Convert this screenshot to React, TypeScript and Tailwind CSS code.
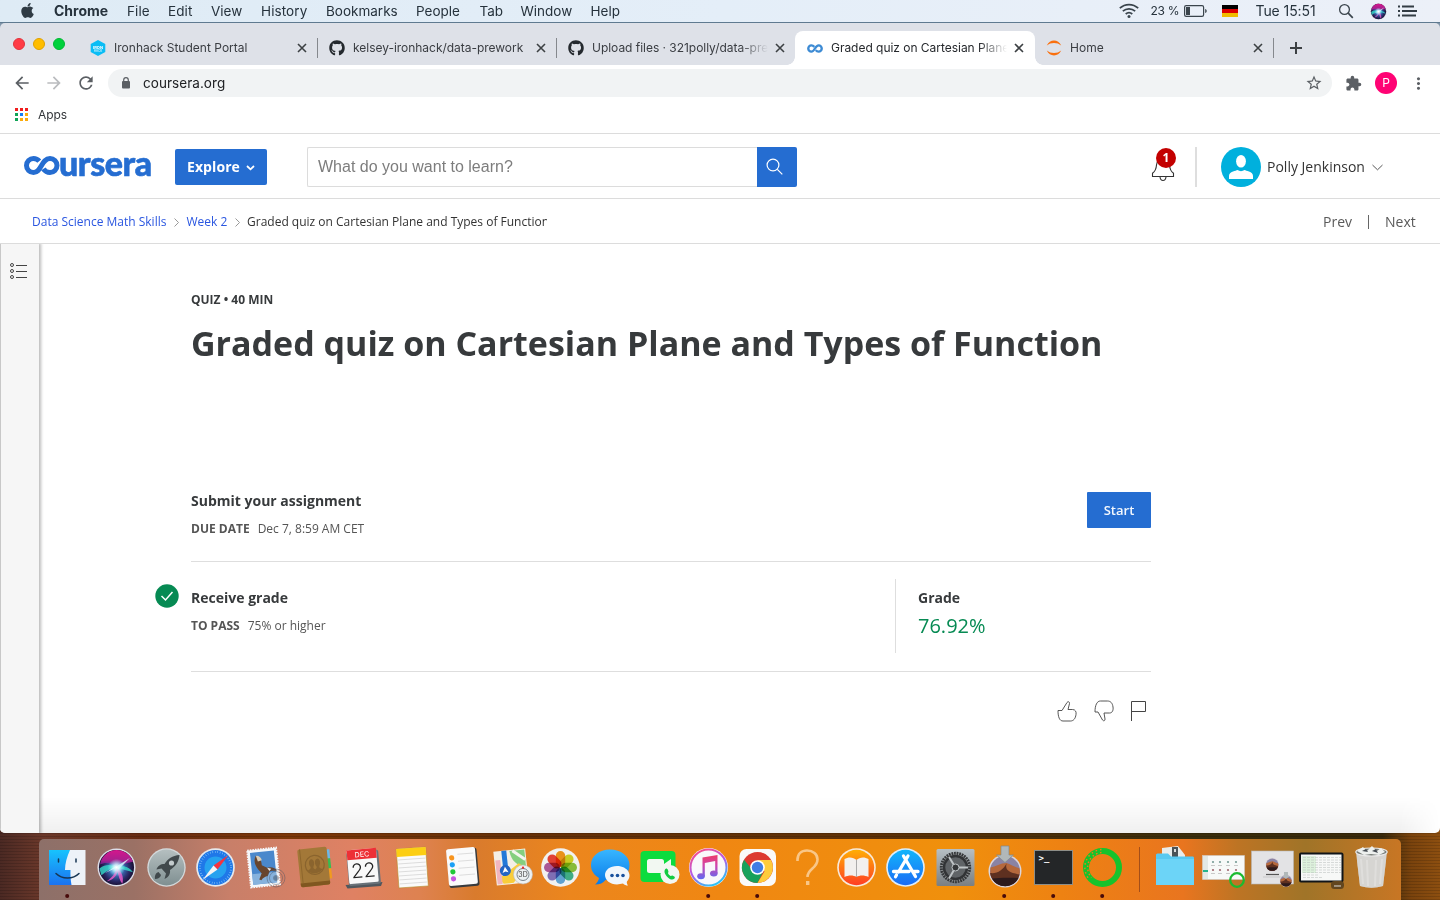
import React from "react";
import { FaApple, FaGithub } from "react-icons/fa";
import { MdArrowBack, MdArrowForward, MdRefresh, MdStarBorder, MdExtension, MdMoreVert } from "react-icons/md";

type Kids = { children?: React.ReactNode };

function MenuBar() {
  return (
    <div className="flex h-[23px] w-full items-center border-b border-[#5f7a90] bg-gradient-to-r from-[#deebf5] via-[#e4eef8] to-[#ecf0f8] font-[Inter,sans-serif] text-[13.5px] leading-[22px] text-[#26323c]">
      <div className="flex w-[54px] pl-[19px]"><FaApple className="-mt-[2px] size-[17px] text-[#2f3b44]" /></div>
      <div className="w-[73px] text-[14px] font-bold tracking-[0px]">Chrome</div>
      <div className="w-[41px] tracking-[0.100px]">File</div>
      <div className="w-[43px] tracking-[0.100px]">Edit</div>
      <div className="w-[50px]">View</div>
      <div className="w-[65px] tracking-[0.100px]">History</div>
      <div className="w-[90px]">Bookmarks</div>
      <div className="w-[63.500px]">People</div>
      <div className="w-[41px]">Tab</div>
      <div className="w-[70px]">Window</div>
      <div className="w-[528px]">Help</div>
      <svg className="-mt-px h-[16px] w-[20px]" viewBox="0 0 20 16" fill="none" stroke="#3a444c" strokeWidth="1.700">
        <path d="M.8 5.200C6 .4 14 .4 19.200 5.200M3.800 8.200c3.600-3.200 8.800-3.200 12.400 0M6.700 11c2-1.700 4.600-1.700 6.600 0" />
        <circle cx="10" cy="13.600" r="1.500" fill="#3a444c" stroke="none" />
      </svg>
      <div className="ml-[12px] w-[33px] whitespace-nowrap text-[12px] tracking-[-0.300px]">23 %</div>
      <svg className="h-[12px] w-[24px]" viewBox="0 0 24 12">
        <rect x=".6" y=".6" width="19" height="10.800" rx="1.600" fill="none" stroke="#3a444c" strokeWidth="1.200" />
        <rect x="2" y="2" width="4" height="8" fill="#3a444c" />
        <path d="M21.200 4v4c1-.4 1.500-1.100 1.500-2s-.5-1.600-1.500-2z" fill="#3a444c" />
      </svg>
      <div className="ml-[14px] flex h-[12px] w-[16px] flex-col"><i className="h-1 bg-black" /><i className="h-1 bg-[#dc0000]" /><i className="h-1 bg-[#f0bd00]" /></div>
      <div className="ml-[18px] w-[82.500px] whitespace-nowrap text-[14px] tracking-[-0.080px]">Tue 15:51</div>
      <svg className="size-[16px]" viewBox="0 0 16 16" fill="none" stroke="#3a444c" strokeWidth="1.300"><circle cx="6.500" cy="6.500" r="4.900" /><path d="m10.200 10.200 4.600 4.600" strokeWidth="1.700" /></svg>
      <svg className="ml-[16px] size-[17px]" viewBox="0 0 40 40"><Siri /></svg>
      <svg className="ml-[11px] h-[12px] w-[19px]" viewBox="0 0 19 12" stroke="#333c44" strokeWidth="1.900"><path d="M0 1.500h2M0 6h2M0 10.500h2M4 1.500h12M4 6h15M4 10.500h14" /></svg>
    </div>
  );
}

function Siri() {
  return (
    <g>
      <defs>
        <radialGradient id="siri" cx=".5" cy=".52" r=".52"><stop offset="0" stopColor="#a9f4ff" /><stop offset=".3" stopColor="#3e7fc6" /><stop offset=".7" stopColor="#2a2a68" /><stop offset="1" stopColor="#160b28" /></radialGradient>
        <radialGradient id="siriGlow"><stop offset="0" stopColor="#fff" /><stop offset=".35" stopColor="#d8fbff" stopOpacity=".8" /><stop offset="1" stopColor="#9ff" stopOpacity="0" /></radialGradient>
        <linearGradient id="siriTop" x1="0" y1="0" x2="0" y2="1"><stop offset="0" stopColor="#d5168c" /><stop offset=".6" stopColor="#a8208f" /><stop offset="1" stopColor="#7b2bb8" stopOpacity=".3" /></linearGradient>
      </defs>
      <circle cx="20" cy="20" r="19.500" fill="#dcdde8" />
      <circle cx="20" cy="20" r="18" fill="url(#siri)" />
      <path d="M3 17C5 7 13 2 20 2s14 4 17 12c-6 1-12 3-15 6C15 15 9 14 3 17z" fill="url(#siriTop)" />
      <path d="M2.500 21c7-5 12-4 18-1-8 1-12 5-16 8zM20 20c8-3 13 0 17 5-6-2-11-3-17-5z" fill="#35dccb" opacity=".8" />
      <path d="M20 20c-1 6-5 11-10 14 6-1 10-5 11-10 1 4 2 9 5 13 2-7-1-14-6-17z" fill="#e85cc8" opacity=".85" />
      <path d="m20 19 14-9-12 12zM20 20 8 26l12-8z" fill="#dff" opacity=".8" />
      <circle cx="20" cy="20" r="9" fill="url(#siriGlow)" />
    </g>
  );
}

function Tab({ icon, title, active, sep, fade, tight }: { icon: React.ReactNode; title: string; active?: boolean; sep?: boolean; fade?: boolean; tight?: boolean }) {
  const mask = fade ? "[mask-image:linear-gradient(to_right,#000_148px,transparent_176px)]" : "";
  return (
    <div className={`relative flex h-[34px] shrink-0 items-center pl-[12px] ${active ? "-mr-px w-[240px] rounded-t-[8px] bg-white text-[#25282c]" : "w-[239px]"}`}>
      {active && (
        <>
          <i className="absolute -left-[8px] bottom-0 size-[8px] bg-[radial-gradient(circle_at_0_0,transparent_7.500px,white_8px)]" />
          <i className="absolute -right-[8px] bottom-0 size-[8px] bg-[radial-gradient(circle_at_100%_0,transparent_7.500px,white_8px)]" />
        </>
      )}
      <div className="flex size-[16px] shrink-0 items-center justify-center">{icon}</div>
      <div className={`ml-[8px] w-[176px] shrink-0 overflow-hidden whitespace-nowrap ${tight ? "tracking-[-0.030px]" : "tracking-[0.020px]"} ${mask}`}>{title}</div>
      <svg className="ml-[7px] size-[10px] shrink-0" viewBox="0 0 10 10" stroke="#3c4043" strokeWidth="1.600"><path d="m1 1 8 8M9 1 1 9" /></svg>
      {sep && <i className="absolute right-[-1px] top-[7px] h-[20px] w-px bg-[#85888d]" />}
    </div>
  );
}

function Infinity2() {
  return (
    <svg className="h-[9px] w-[16px]" viewBox="0 0 44 24" fill="none" stroke="#3d8bd4" strokeWidth="6.500"><path d="M20 7.500C17 4 14 3.500 12 3.500a8.500 8.500 0 0 0 0 17c10 0 10-17 20-17a8.500 8.500 0 0 1 0 17c-4 0-6-1.500-8-4" /></svg>
  );
}

function Browser() {
  return (
    <>
      <div className="bg-[#7f94a8]">
        <div className="flex h-[42px] items-end rounded-t-[5px] bg-[#dee1e8] font-[Inter,sans-serif] text-[12px] text-[#3a3d42]">
          <div className="flex h-full w-[78px] shrink-0 items-center gap-[8px] pl-[13px]">
            <i className="size-[12px] rounded-full border border-[#e2333c] bg-[#ff3b45]" />
            <i className="size-[12px] rounded-full border border-[#e0a100] bg-[#ffbd00]" />
            <i className="size-[12px] rounded-full border border-[#00b833] bg-[#00d13c]" />
          </div>
          <Tab sep title="Ironhack Student Portal" icon={<svg className="size-[16px]" viewBox="0 0 16 16"><path d="m8 0 7.300 4v8L8 16 .7 12V4z" fill="#0abdf5" /><text x="8" y="8.500" textAnchor="middle" fontSize="4" fontWeight="700" fill="#fff">IRON</text><text x="8" y="11.500" textAnchor="middle" fontSize="3" fill="#fff">HACK</text></svg>} />
          <Tab sep tight title="kelsey-ironhack/data-prework" icon={<FaGithub className="size-[16px] text-[#24292e]" />} />
          <Tab fade tight title="Upload files · 321polly/data-prework" icon={<FaGithub className="size-[16px] text-[#24292e]" />} />
          <Tab active fade tight title="Graded quiz on Cartesian Plane and" icon={<Infinity2 />} />
          <Tab sep title="Home" icon={<svg className="size-[16px]" viewBox="0 0 16 16" fill="#f9700f"><path d="M.8 5.500C2.400 2.200 5 .6 8 .6s5.600 1.600 7.200 4.900C13.200 3.800 10.800 3 8 3S2.800 3.800.8 5.500zM.8 10.500c1.600 3.300 4.200 4.900 7.200 4.900s5.600-1.600 7.200-4.900C13.200 12.200 10.800 13 8 13s-5.200-.8-7.200-2.500z" /></svg>} />
          <div className="flex h-[34px] items-center pl-[17px]"><svg className="size-[12px]" viewBox="0 0 12 12" stroke="#3c4043" strokeWidth="2"><path d="M6 0v12M0 6h12" /></svg></div>
        </div>
      </div>
      <div className="flex h-[36px] items-center bg-white pl-[12px] text-[#5b5f64]">
        <MdArrowBack className="size-[20px]" />
        <MdArrowForward className="ml-[12px] size-[20px] text-[#babcbf]" />
        <MdRefresh className="ml-[12px] size-[20px]" />
        <div className="ml-[12px] flex h-[28px] w-[1224px] items-center rounded-full bg-[#f1f3f4] pl-[11px]">
          <svg className="h-[14px] w-[14px]" viewBox="0 0 14 14"><rect x="3" y="5" width="8" height="7.500" rx="1" fill="#5b5f64" /><path d="M4.700 5.500V4a2.300 2.300 0 0 1 4.600 0v1.500" fill="none" stroke="#5b5f64" strokeWidth="1.200" /></svg>
          <div className="ml-[10px] flex-1 font-[Inter,sans-serif] text-[13.500px] tracking-[0.050px] text-[#202124]">coursera.org</div>
          <MdStarBorder className="mr-[9px] size-[18px]" />
        </div>
        <MdExtension className="ml-[13px] size-[17px]" />
        <div className="ml-[13px] flex size-[22px] items-center justify-center rounded-full bg-[#ff0374] font-[Inter,sans-serif] text-[12px] text-white">P</div>
        <MdMoreVert className="ml-[12px] size-[19px]" />
      </div>
      <div className="flex h-[33px] items-start border-b border-[#dcdcdc] bg-white pl-[15px] pt-[6px]">
        <svg className="mt-px size-[13px]" viewBox="0 0 13 13">
          <path d="M0 0h3v3H0zM5 0h3v3H5zM10 0h3v3h-3z" fill="#f01d1d" />
          <path d="M0 5h3v3H0zM0 10h3v3H0z" fill="#10a457" /><path d="M5 5h3v3H5z" fill="#147ef5" />
          <path d="M10 5h3v3h-3zM5 10h3v3H5zM10 10h3v3h-3z" fill="#fbab0b" />
        </svg>
        <div className="ml-[10px] font-[Inter,sans-serif] text-[12px] leading-[15px] tracking-[-0.100px] text-[#33363a]">Apps</div>
      </div>
    </>
  );
}

function Header() {
  return (
    <>
      <div className="flex h-[65px] items-center border-b border-[#dcdcdc] bg-white pl-[24px] pt-[2px]">
        <div className="flex h-[40px] w-[151px] items-center" aria-label="coursera">
          <svg className="-mt-[3px] h-[19px] w-[36px] shrink-0" viewBox="0 0 36 19" fill="none" stroke="#256dd1" strokeWidth="5"><path d="M15.300 5.200C13.700 3.300 11.600 2.500 9.500 2.500a7 7 0 0 0 0 14C17.500 16.500 17.300 2.500 26 2.500a7 7 0 0 1 0 14c-2.800 0-5-1.300-6.600-3.700" /></svg>
          <div className="-ml-px -mt-[9px] whitespace-nowrap font-[Lato,sans-serif] text-[34px] font-black leading-[34px] tracking-[-0.450px] text-[#256dd1] [-webkit-text-stroke:0.600px_#256dd1]">ursera</div>
        </div>
        <div className="flex h-[36px] w-[92px] items-center rounded-[2px] bg-[#256dd1] pl-[12px] font-['Open_Sans',sans-serif] text-[14px] font-bold tracking-[0.080px] text-white">
          <span className="-mt-[2px]">Explore</span><svg className="ml-[6px] mt-[2px] h-[6px] w-[9px]" viewBox="0 0 9 6" fill="none" stroke="#fff" strokeWidth="1.800"><path d="m1 1 3.500 3.300L8 1" /></svg>
        </div>
        <div className="ml-[40px] flex h-[40px] w-[450px] items-center rounded-l-[2px] border border-r-0 border-[#dcdcdc] pl-[10px] font-['Liberation_Sans',sans-serif] text-[16px] text-[#7d7d7d]">What do you want to learn?</div>
        <div className="flex size-[40px] items-center justify-center rounded-r-[2px] bg-[#256dd1]"><svg className="-ml-[5px] -mt-px size-[17px]" viewBox="0 0 17 17" fill="none" stroke="#fff" strokeWidth="1.200"><circle cx="7" cy="7" r="5.900" /><path d="m11.300 11.300 5 5" /></svg></div>
        <div className="relative ml-[354px] h-[40px] w-[24px]">
          <svg className="absolute left-0 top-[9px] h-[26px] w-[24px]" viewBox="0 0 24 26" fill="none" stroke="#333" strokeWidth="1.100"><path d="M1.500 20.500v-3.200c3.200-2.500 3.800-5 4-8.300C5.900 5.500 8 3.500 12 3.500s6.100 2 6.500 5.500c.2 3.300.8 5.800 4 8.300v3.200zM9 21c.3 2.300 1.500 3.500 3 3.500s2.700-1.200 3-3.500" /></svg>
          <div className="absolute left-[5px] top-px flex size-[20px] items-center justify-center rounded-full bg-[#c30000] font-['Open_Sans',sans-serif] text-[12px] font-bold text-white">1</div>
        </div>
        <i className="ml-[20px] h-[40px] w-[2px] bg-[#dedede]" />
        <svg className="ml-[24px] size-[40px]" viewBox="0 0 40 40"><circle cx="20" cy="20" r="20" fill="#00b0dd" /><ellipse cx="20" cy="14.300" rx="4.900" ry="6.300" fill="#fff" /><path d="M8 32v-3c0-2.500 1.500-3.800 4-4.600 2-.6 3.500-.9 4.500-1.400 2 1.500 5 1.500 7 0 1 .5 2.500.8 4.500 1.400 2.500.8 4 2.100 4 4.600v3z" fill="#fff" /></svg>
        <div className="-mt-px ml-[6px] w-[104.500px] whitespace-nowrap font-['Open_Sans',sans-serif] text-[14px] text-[#333]">Polly Jenkinson</div>
        <svg className="mt-px h-[7px] w-[11px]" viewBox="0 0 11 7" fill="none" stroke="#555"><path d="m.5 1 5 4.800 5-4.800" /></svg>
      </div>
      <div className="flex h-[45px] items-center border-b border-[#dcdcdc] bg-white pl-[32px] font-['Open_Sans',sans-serif] text-[12px] text-[#333]">
        <div className="mt-[2px] w-[142px] whitespace-nowrap text-[#2a56e0]">Data Science Math Skills</div>
        <Chevron />
        <div className="ml-[7.500px] mt-[2px] w-[48px] text-[#2a56e0]">Week 2</div>
        <Chevron />
        <div className="ml-[7.500px] mt-[2px] w-[300px] overflow-hidden whitespace-nowrap">Graded quiz on Cartesian Plane and Types of Function</div>
        <div className="ml-[776px] w-[45px] text-[14px] text-[#5a5a5a]">Prev</div>
        <i className="mt-px h-[14px] w-px bg-[#666]" />
        <div className="ml-[16px] text-[14px] text-[#5a5a5a]">Next</div>
      </div>
    </>
  );
}

function Chevron() {
  return <svg className="mt-[3px] h-[9px] w-[5px] shrink-0" viewBox="0 0 5 9" fill="none" stroke="#999"><path d="m.5.5 4 4-4 4" /></svg>;
}

function Page() {
  return (
    <div className="relative flex h-[589px] overflow-hidden rounded-b-[5px] bg-white font-['Open_Sans',sans-serif] text-[#373a3c]">
      <div className="z-10 w-[39px] shrink-0 border-l border-[#c8c8c8] bg-[#f6f6f6] pl-[8px] pt-[18px] shadow-[1px_0_3px_1px_rgba(0,0,0,0.27)]">
        <svg className="h-[18px] w-[19px]" viewBox="0 0 19 18" fill="none" stroke="#444"><circle cx="3" cy="3" r="1.500" /><circle cx="3" cy="9" r="1.500" /><circle cx="3" cy="15" r="1.500" /><path d="M7 3.500h11M7 9.500h11M7 15.500h11" /></svg>
      </div>
      <div className="ml-[152px] w-[960px]">
        <div className="mt-[47px] text-[12px] font-bold leading-[18px]">QUIZ • 40 MIN</div>
        <h1 className="mt-[10px] whitespace-nowrap text-[34px] font-bold leading-[48px]">Graded quiz on Cartesian Plane and Types of Function</h1>
        <div className="mt-[125px] flex h-[70px] justify-between border-b border-[#dedede]">
          <div className="-mt-[3px]">
            <div className="text-[14px] font-bold leading-[24px]">Submit your assignment</div>
            <div className="mt-[5px] flex gap-[8px] text-[12px] leading-[22px] text-[#555]"><b>DUE DATE</b><span>Dec 7, 8:59 AM CET</span></div>
          </div>
          <div className="flex h-[36px] w-[64px] items-center justify-center rounded-[1px] bg-[#256dd1] pt-px text-[13px] font-semibold text-white/95">Start</div>
        </div>
        <div className="relative flex h-[110px] border-b border-[#dedede] pt-[17px]">
          <svg className="absolute -left-[36px] top-[22px] size-[24px]" viewBox="0 0 24 24"><circle cx="12" cy="12" r="11.700" fill="#068a53" /><path d="m6.500 12 4 4 7-8" fill="none" stroke="#fff" strokeWidth="1.500" /></svg>
          <div className="w-[704px] pt-[7px]">
            <div className="text-[14px] font-bold leading-[24px]">Receive grade</div>
            <div className="mt-[5px] flex gap-[8px] text-[12px] leading-[22px] text-[#555]"><b>TO PASS</b><span>75% or higher</span></div>
          </div>
          <div className="h-[74px] border-l border-[#dedede] pl-[22px] pt-[7px]">
            <div className="text-[14px] font-bold leading-[24px]">Grade</div>
            <div className="mt-px text-[20px] leading-[30px] text-[#068a53]">76.92%</div>
          </div>
        </div>
        <div className="mt-[28px] flex justify-end pr-[5px]">
          <svg className="h-[22px] w-[20px]" viewBox="0 0 20 22" fill="none" stroke="#444" strokeWidth=".9"><path d="M1 10.500h4l5-8c1-1.500 2.800-.7 2.500 1L11 9.500h4.500c3 0 4 2.500 3.500 5-.5 4-2.500 6.500-5.500 6.500H6c-3.500 0-5-4-5-10.500z" /></svg>
          <svg className="ml-[17px] h-[22px] w-[20px]" viewBox="0 0 20 22" fill="none" stroke="#444" strokeWidth=".9"><path d="M1 12h3l4.500 8c1 1.500 2.800.7 2.500-1l-1-6h5.500c3 0 4-3 3.500-6-.5-4-2.500-6-5.500-6H6.500C3 1 1 5 1 12z" /></svg>
          <svg className="ml-[16px] h-[22px] w-[16px]" viewBox="0 0 16 22" fill="none" stroke="#444"><path d="M1.500 21V1.500h14v10h-14" /></svg>
        </div>
      </div>
      <div className="absolute bottom-0 left-0 h-[36px] w-full bg-gradient-to-t from-black/[0.060] to-transparent [mask-image:linear-gradient(to_right,transparent,#000_40px_1400px,transparent)]" />
    </div>
  );
}

function Cell({ children, dot }: Kids & { dot?: boolean }) {
  return (
    <svg className="h-[61px] w-[49.300px] shrink-0" viewBox="0 0 49.300 61">
      {children}
      {dot && <circle cx="24.200" cy="57" r="2" fill="#480a0a" />}
    </svg>
  );
}

const petals: [number, string][] = [[0, "#f79a1b"], [45, "#d5d825"], [90, "#8fc63d"], [135, "#43b68d"], [180, "#65aadc"], [225, "#8675c0"], [270, "#b45ca0"], [315, "#ef4438"]];

function Dock() {
  return (
    <div className="mx-[39px] mt-[6px] flex h-[61px] items-start rounded-t-[5px] bg-[linear-gradient(90deg,#8d7069_0%,#9b7165_7%,#c87f69_14%,#df8163_23%,#de8250_28%,#d97b2d_32%,#ec861d_39%,#f08712_50%,#f0900c_67%,#ee8212_75%,#e9751f_84%,#bd7424_88%,#a07428_93%,#c87624_100%)] pl-[4.200px]">
      <Cell dot>
        <defs><linearGradient id="fb" x1="0" y1="0" x2="0" y2="1"><stop offset="0" stopColor="#17c3fd" /><stop offset="1" stopColor="#1b72f0" /></linearGradient></defs>
        <path d="M6 11h36.500v35H6z" fill="#edf2f8" /><path d="M6 11h21c-3 7-5 13-5 20h5.500c-.2 5 .1 10 1 15H6z" fill="url(#fb)" />
        <path d="M15.500 20v3M33 20v3M13 34.500c6 6 17 6 23 0" fill="none" stroke="#173653" strokeWidth="1.500" strokeLinecap="round" />
      </Cell>
      <Cell><svg x="5" y="9" width="39" height="39" viewBox="0 0 40 40"><Siri /></svg></Cell>
      <Cell>
        <defs><linearGradient id="lp" x1="0" y1="0" x2="0" y2="1"><stop offset="0" stopColor="#b5bfc0" /><stop offset="1" stopColor="#7f8f91" /></linearGradient></defs>
        <circle cx="24.500" cy="28.500" r="19.200" fill="#d4d9db" /><circle cx="24.500" cy="28.500" r="17.900" fill="url(#lp)" />
        <path d="M37.500 16c-7 .5-12 4-15 9-4 0-7 2-8 5.500l5-1 4.500 5-1.500 5.500c4-1.500 6-5 5.500-9 5-3 9-8 9.500-15z" fill="#41494c" /><circle cx="29.500" cy="24" r="2.600" fill="#c3cbcd" /><path d="M16.500 33c-3 1-4 4-3.500 7 3 0 5.500-1.500 6-4z" fill="#41494c" />
      </Cell>
      <Cell>
        <circle cx="24.500" cy="28.500" r="19.300" fill="#e6e8ec" /><circle cx="24.500" cy="28.500" r="17.600" fill="#1f78e8" /><circle cx="24.500" cy="28.500" r="15.600" fill="none" stroke="#9bd2fa" strokeWidth="2" strokeDasharray=".5 2" />
        <circle cx="24.500" cy="28.500" r="11" fill="#29b4f2" opacity=".7" />
        <path d="m37.500 16-15 10.500 4 4z" fill="#f5333f" /><path d="m11.500 41 11-14.500 4 4z" fill="#f4f4f4" />
      </Cell>
      <Cell>
        <g transform="rotate(-6 24 28)"><rect x="9" y="10" width="29" height="37" fill="#f5f7fa" stroke="#f5f7fa" strokeWidth="2" strokeDasharray="1.600 1" /><rect x="11.500" y="12.500" width="24" height="32" fill="#4a88cc" /><path d="M11.500 34h24v10.500h-24z" fill="#86b2dd" />
          <path d="M17 16c4 1 5 5 5 10l5 3c4-1 8 1 10 4-3 0-6-1-8 0l-2 4c-3 1-5 1-7 4l-2-1 3-6-3-4c-3-5-4-9-1-14z" fill="#68452d" /><path d="M17 16c3 0 5 2 5.500 5l-4 1z" fill="#d9cdb8" /><path d="m27 29 4 1.500-2 2z" fill="#eee" /></g>
        <g fill="none" stroke="#4c5261" opacity=".45"><circle cx="36" cy="39" r="9" /><circle cx="36" cy="39" r="6.500" /><circle cx="36" cy="39" r="2.500" fill="#345" /></g>
      </Cell>
      <Cell>
        <g transform="rotate(-6 24 28)"><path d="M36 12h5v9h-5z" fill="#6bb9e6" /><path d="M36 21h5v10h-5z" fill="#36bd52" /><path d="M36 31h5v10h-5z" fill="#f09a20" /><rect x="9" y="9" width="29.500" height="38" rx="2" fill="#a37838" /><path d="M9 43h29.500v2a2 2 0 0 1-2 2H11a2 2 0 0 1-2-2z" fill="#805720" /><path d="M11.500 9v34" stroke="#8a622a" strokeWidth=".8" /><circle cx="25" cy="26" r="9.500" fill="none" stroke="#8a642e" strokeWidth="1.200" /><path d="M17.500 31c3-1.500 3.500-2 3-3.500-2-3-1-7.500 1.500-7.500s3.500 4.500 1.500 7.500c-.5 1.500 0 2 1.500 3 1.500-1 2-1.500 1.500-3-2-3-1-7.500 1.500-7.500s3.500 4.500 1.500 7.500c-.5 1.500 0 2 3 3.500-4 4.500-11 4.500-15 0z" fill="#8a642e" /></g>
      </Cell>
      <Cell>
        <path d="m6.500 46 37-3-1.500 4L8.500 49.500z" fill="#50575d" />
        <g transform="rotate(-5 24 28)"><rect x="8.500" y="12" width="32" height="34" rx="2" fill="#697178" /><rect x="9" y="10" width="29.500" height="34" rx="1.500" fill="#f8f8f8" /><path d="M9 10h29.500v10H9z" fill="#ed3036" /><text x="24" y="17.800" textAnchor="middle" fontFamily="Inter" fontSize="7.200" fill="#fff">DEC</text><text x="24" y="38.500" textAnchor="middle" fontFamily="Inter" fontSize="20" fontWeight="300" fill="#222">22</text></g>
      </Cell>
      <Cell>
        <g transform="rotate(-4 24.500 28)"><rect x="9.500" y="9" width="29.500" height="39" fill="#fafafa" stroke="#b58b2a" strokeWidth=".6" /><path d="M9.500 9H39v8H9.500z" fill="#fcce13" /><path d="M10.500 20H38M10.500 24H38M10.500 28H38M10.500 32H38M10.500 36H38M10.500 40H38M10.500 44H38" stroke="#d6d6d6" strokeWidth=".8" /></g>
      </Cell>
      <Cell>
        <g transform="rotate(-5 24 28)"><rect x="10" y="10" width="30" height="38" rx="2" fill="#383b3e" /><rect x="9.500" y="9" width="29" height="37" rx="2" fill="#fafafa" /><circle cx="14.500" cy="18" r="2.600" fill="#f7941e" /><circle cx="14.500" cy="25" r="2.600" fill="#1ba0f6" /><circle cx="14.500" cy="32" r="2.600" fill="#20c838" /><circle cx="14.500" cy="39" r="2.600" fill="#c755e0" /><path d="M20.500 15h16M20.500 22h16M20.500 29h16M20.500 36h16" stroke="#ddd" /></g>
      </Cell>
      <Cell>
        <g transform="rotate(-6 24 28)"><rect x="8" y="11" width="32" height="34" fill="#f4efe5" /><path d="M24 12h15v17c-9-1-14-7-15-17z" fill="#85cf7f" /><path d="m27 12 12 10" stroke="#f5f5ef" strokeWidth="3" /><path d="M9 36h6l17-11 7 5-14 14H15z" fill="#f9cd3b" /><path d="M9 20h5v24H9z" fill="#f1b5be" /><path d="M16 11h5v19h-5z" fill="#2378d8" /><circle cx="18" cy="31" r="5.500" fill="#2465c4" /><path d="m18 27 3 6-3-1-3 1z" fill="#fff" /></g>
        <circle cx="36" cy="35.500" r="9.500" fill="#edf1f2" stroke="#bbb" strokeWidth=".6" /><circle cx="36" cy="35.500" r="6" fill="none" stroke="#78838b" /><text x="36" y="38.200" textAnchor="middle" fontFamily="Inter" fontSize="7" fill="#444">3D</text><path d="m36 27-1.500 2.500h3z" fill="#e11" />
      </Cell>
      <Cell>
        <circle cx="24.500" cy="28.500" r="19.300" fill="#f1f1f0" />
        {petals.map(([angle, color]) => <rect key={angle} x="19.800" y="12" width="9.400" height="16" rx="4.700" fill={color} className="mix-blend-multiply" transform={`rotate(${angle} 24.500 28.500)`} />)}
      </Cell>
      <Cell>
        <defs><linearGradient id="msg" x1="0" y1="0" x2="0" y2="1"><stop offset="0" stopColor="#38b6ff" /><stop offset="1" stopColor="#087ae8" /></linearGradient></defs>
        <path d="M25 10.500C14 10.500 6 17 6 26c0 6 3 10 8 13-.5 3-2 5-4 6.500 5 0 8-1.500 10.500-4.500 14 2 24-4 24-15 0-9-8.500-15.500-19.500-15.500z" fill="url(#msg)" /><path d="M32 27c-7 0-12 4-12 9s5 9.500 12 9.500l6-1c1.500 1.500 3 2 5 2-1-1.500-1.500-3-1-4 6-6 1-15.500-10-15.500z" fill="#f1f6fb" /><g fill="#19519d"><circle cx="27" cy="36.500" r="1.800" /><circle cx="32.500" cy="36.500" r="1.800" /><circle cx="38" cy="36.500" r="1.800" /></g>
      </Cell>
      <Cell>
        <rect x="5.500" y="12" width="35" height="31" rx="4" fill="#0bdc3e" /><rect x="12" y="20" width="17" height="14" rx="2.500" fill="#f2f8f2" /><path d="m29 25 7-5v12l-7-3z" fill="#f2f8f2" /><circle cx="35" cy="35.500" r="9.500" fill="#f3f6f3" /><path d="M30 30.500c1-1.500 2-1.500 3 .5l.5 2c-1 1-.5 2 2 4l2-.5c2 1 3 1.500 2 3-2 2-4 1-6-.5-3-2.500-5-6-3.500-8.500z" fill="#13cb42" />
      </Cell>
      <Cell dot>
        <defs>
          <linearGradient id="mus" x1=".2" y1="0" x2=".7" y2="1"><stop offset="0" stopColor="#fb4b86" /><stop offset=".5" stopColor="#b25be8" /><stop offset="1" stopColor="#25c9f5" /></linearGradient>
          <linearGradient id="note" gradientUnits="userSpaceOnUse" x1="24" y1="14" x2="24" y2="40"><stop offset="0" stopColor="#f23c5c" /><stop offset=".5" stopColor="#cf45b0" /><stop offset="1" stopColor="#6068f0" /></linearGradient>
        </defs>
        <circle cx="24.500" cy="28.500" r="19.500" fill="#f5eff7" /><circle cx="24.500" cy="28.500" r="18" fill="#f9f8fb" stroke="url(#mus)" strokeWidth="2" /><g fill="url(#note)"><path d="M18.500 18.500 33.500 16v18.500h-2.300V22l-10.400 2v13h-2.300z" /><ellipse cx="17" cy="37.300" rx="3.800" ry="3" /><ellipse cx="29.800" cy="34.600" rx="3.800" ry="3" /></g>
      </Cell>
      <Cell dot>
        <rect x="6.500" y="10" width="36.500" height="37" rx="7" fill="#fafafa" /><circle cx="24.500" cy="28.500" r="15.500" fill="#dc3a31" /><path d="M11.100 20.700A15.500 15.500 0 0 0 24.500 44l6-12-11-1z" fill="#17a15b" /><path d="M38 21H24.500l7 11.500-7 11.500A15.500 15.500 0 0 0 38 21z" fill="#fecc3b" /><circle cx="24.500" cy="28.500" r="7.300" fill="#fff" /><circle cx="24.500" cy="28.500" r="5.700" fill="#3f7de4" />
      </Cell>
      <Cell><path d="M14.500 22v-1c0-6 4-9.500 9.500-9.500 6 0 10.500 3.500 10.500 9 0 9-10 9-10 17.500" fill="none" stroke="#f9c687" strokeWidth="2.600" /><rect x="23" y="42" width="3.400" height="4" fill="#f9c687" /></Cell>
      <Cell>
        <defs><linearGradient id="bk" x1="0" y1="0" x2="0" y2="1"><stop offset="0" stopColor="#ffae05" /><stop offset="1" stopColor="#ff3e24" /></linearGradient></defs>
        <circle cx="24.500" cy="28.500" r="19.300" fill="#f8e9da" /><circle cx="24.500" cy="28.500" r="17.700" fill="url(#bk)" /><path d="M24.500 21c-3-3-8-3.500-12-1v18c4-2 9-2 12 0 3-2 8-2 12 0V20c-4-2.500-9-2-12 1z" fill="#f2f0ee" /><path d="M24.500 21v17" stroke="#aaa" />
      </Cell>
      <Cell>
        <defs><linearGradient id="as" x1="0" y1="0" x2="0" y2="1"><stop offset="0" stopColor="#12b5fb" /><stop offset="1" stopColor="#1b6cf5" /></linearGradient></defs>
        <circle cx="24.500" cy="28.500" r="19.300" fill="#dfeefb" /><circle cx="24.500" cy="28.500" r="17.700" fill="url(#as)" /><path d="m22.500 17 12 20.500M27 17 17.500 33M12.500 32.500H28M32 32.500h5M15.500 36l-1 1.800" stroke="#fff" strokeWidth="3.300" strokeLinecap="round" />
      </Cell>
      <Cell>
        <defs><linearGradient id="sp" x1="0" y1="0" x2="0" y2="1"><stop offset="0" stopColor="#b6bfc4" /><stop offset="1" stopColor="#7a7f82" /></linearGradient></defs>
        <rect x="5.500" y="10" width="38" height="37" rx="1.500" fill="url(#sp)" /><circle cx="24.500" cy="28.500" r="14.200" fill="#a2a5a6" stroke="#353739" strokeWidth="3" strokeDasharray="1.800 .8" /><circle cx="24.500" cy="28.500" r="11.500" fill="#606467" stroke="#323436" strokeWidth="2.500" /><path d="M24.500 28.500H37M24.500 28.500 18 18M24.500 28.500 18 39.500" stroke="#bfc4c6" strokeWidth="2" /><circle cx="24.500" cy="28.500" r="3.500" fill="#353739" stroke="#bfc4c6" />
      </Cell>
      <Cell dot>
        <Mojave /><path d="M21 7h8v9h4.500L25 23.500 16.500 16H21z" fill="#b1b8b9" stroke="#80888c" strokeWidth=".7" />
      </Cell>
      <Cell dot><rect x="5.500" y="11.500" width="38" height="34" fill="#242628" stroke="#8e8e88" /><text x="9.500" y="22" fontFamily="DejaVu Sans Mono" fontWeight="700" fontSize="9" fill="#fff">&gt;_</text></Cell>
      <Cell dot><circle cx="24.500" cy="28.500" r="16.500" fill="none" stroke="#16c32c" strokeWidth="6" /><path d="M23.500 10.500a18 18 0 0 0-12 30" fill="none" stroke="#f07b17" strokeWidth="1.500" strokeDasharray="1.500 3" /><path d="M23.500 13.500a15 15 0 0 0-10 25" fill="none" stroke="#f07b17" strokeWidth="1.500" strokeDasharray="1.500 2.600" /></Cell>
      <i className="ml-[10.800px] mr-[10px] mt-[8px] h-[45px] w-px shrink-0 bg-[#a44e18]" />
      <Cell><path d="m12 9 16-2 7 9v9H12z" fill="#e9eceb" /><path d="M22 8h6v12h-6z" fill="#4b5357" /><path d="M24 10h2v3h-2z" fill="#ddd" /><path d="M6 16q0-1.500 1.500-1.500H18l3 3h22q1 0 1 1.500v27H6z" fill="#58c9f1" /><path d="M6 20h38v26H6z" fill="#6cd4f7" /></Cell>
      <Cell>
        <rect x="3.500" y="16.500" width="42" height="24" fill="#f7f9f8" stroke="#ccc" strokeWidth=".5" /><path d="M4 17h5v23H4z" fill="#e2e8e5" /><path d="M4 31h5v2H4z" fill="#25b48d" />
        {[14, 21, 29, 37].map((x) => <g key={x}><circle cx={x} cy="23" r="1.100" fill="#769b95" /><circle cx={x} cy="31" r="1.100" fill="#a06770" /><path d={`M${x - 2} 26.500h4M${x - 2} 34.500h4`} stroke="#aaa" strokeWidth=".6" /></g>)}
        <circle cx="38" cy="41" r="6.800" fill="none" stroke="#1bba30" strokeWidth="2.300" />
      </Cell>
      <Cell><rect x="3.500" y="12" width="42" height="33" fill="#e3e3e5" stroke="#b8b8b8" strokeWidth=".6" /><g transform="translate(14 12.500) scale(.41)"><Mojave /></g><path d="M18 35.500h13" stroke="#555" strokeWidth="1.200" /><path d="M15 38h19" stroke="#bbb" strokeWidth=".7" /><g transform="translate(28.500 29.500) scale(.38)"><Mojave /></g><path d="M36 33h4v4h2l-4 3-4-3h2z" fill="#b1b8b9" /></Cell>
      <Cell><rect x="3" y="14.500" width="42.500" height="28" rx="1" fill="#f7f8f7" stroke="#111519" strokeWidth="2" /><path d="M5 17h14v17H5z" fill="#ddf1dc" /><path d="M6 18.500h38M6 21h38M6 23.500h38M6 26h38M6 28.500h38M6 31h38M6 33.500h38M6 36h15M6 38.500h19" stroke="#b4bbb9" strokeWidth=".5" strokeDasharray="3 1" /><rect x="34" y="42" width="13" height="8" rx="3.500" fill="#62461f" /><path d="M37 47h7" stroke="#ddd" /></Cell>
      <Cell><path d="M9 13h31l-4 34q-11.500 3.500-23 0z" fill="#d6d5d2" /><ellipse cx="24.500" cy="13" rx="15.700" ry="4" fill="#7a7f7b" stroke="#e9e9e9" strokeWidth="1.200" /><path d="m10 12 6-4 4 4 5-5 5 5 4-3 4 4-6 3-8-1-7 1z" fill="#edf0ee" /><path d="m15 12 4-2 2 3zM25 12l4-2 2 4z" fill="#454b52" /><path d="m14 20 2 25M20 21l1 26M29 21l-1 26M35 20l-2 25" stroke="#e4e3e1" strokeWidth="2" opacity=".7" /></Cell>
    </div>
  );
}

function Mojave() {
  return (
    <g>
      <circle cx="25" cy="32" r="16.500" fill="#dcd6dc" /><circle cx="25" cy="32" r="15" fill="#8a83a4" />
      <path d="M10.500 28.500c5-1 10-4.500 16-4.500 4 1.500 9 4 13 5.500q.5 2.500.4 4A15 15 0 0 1 10.200 34z" fill="#b5683c" />
      <path d="M10.100 34c7 1 13-3 16.500-9.500-2 7 3 9 13 11A15 15 0 0 1 10.100 34z" fill="#5e3020" />
      <path d="M12 39.500c8-1 18-1 26.500-.5A15 15 0 0 1 12 39.500z" fill="#2c1a1c" />
    </g>
  );
}

export default function App() {
  return (
    <div className="h-[900px] w-[1440px] overflow-hidden bg-[repeating-linear-gradient(0deg,rgba(0,0,0,0.14)_0_1px,transparent_1px_3px),linear-gradient(90deg,#4b2923_0%,#6b382a_3%,#672c12_10%,#7c3708_20%,#653008_35%,#5e3107_60%,#392d0c_83%,#39290b_96%,#7a430d_98%,#8d4f10_100%)]">
      <MenuBar />
      <Browser />
      <Header />
      <Page />
      <Dock />
    </div>
  );
}
